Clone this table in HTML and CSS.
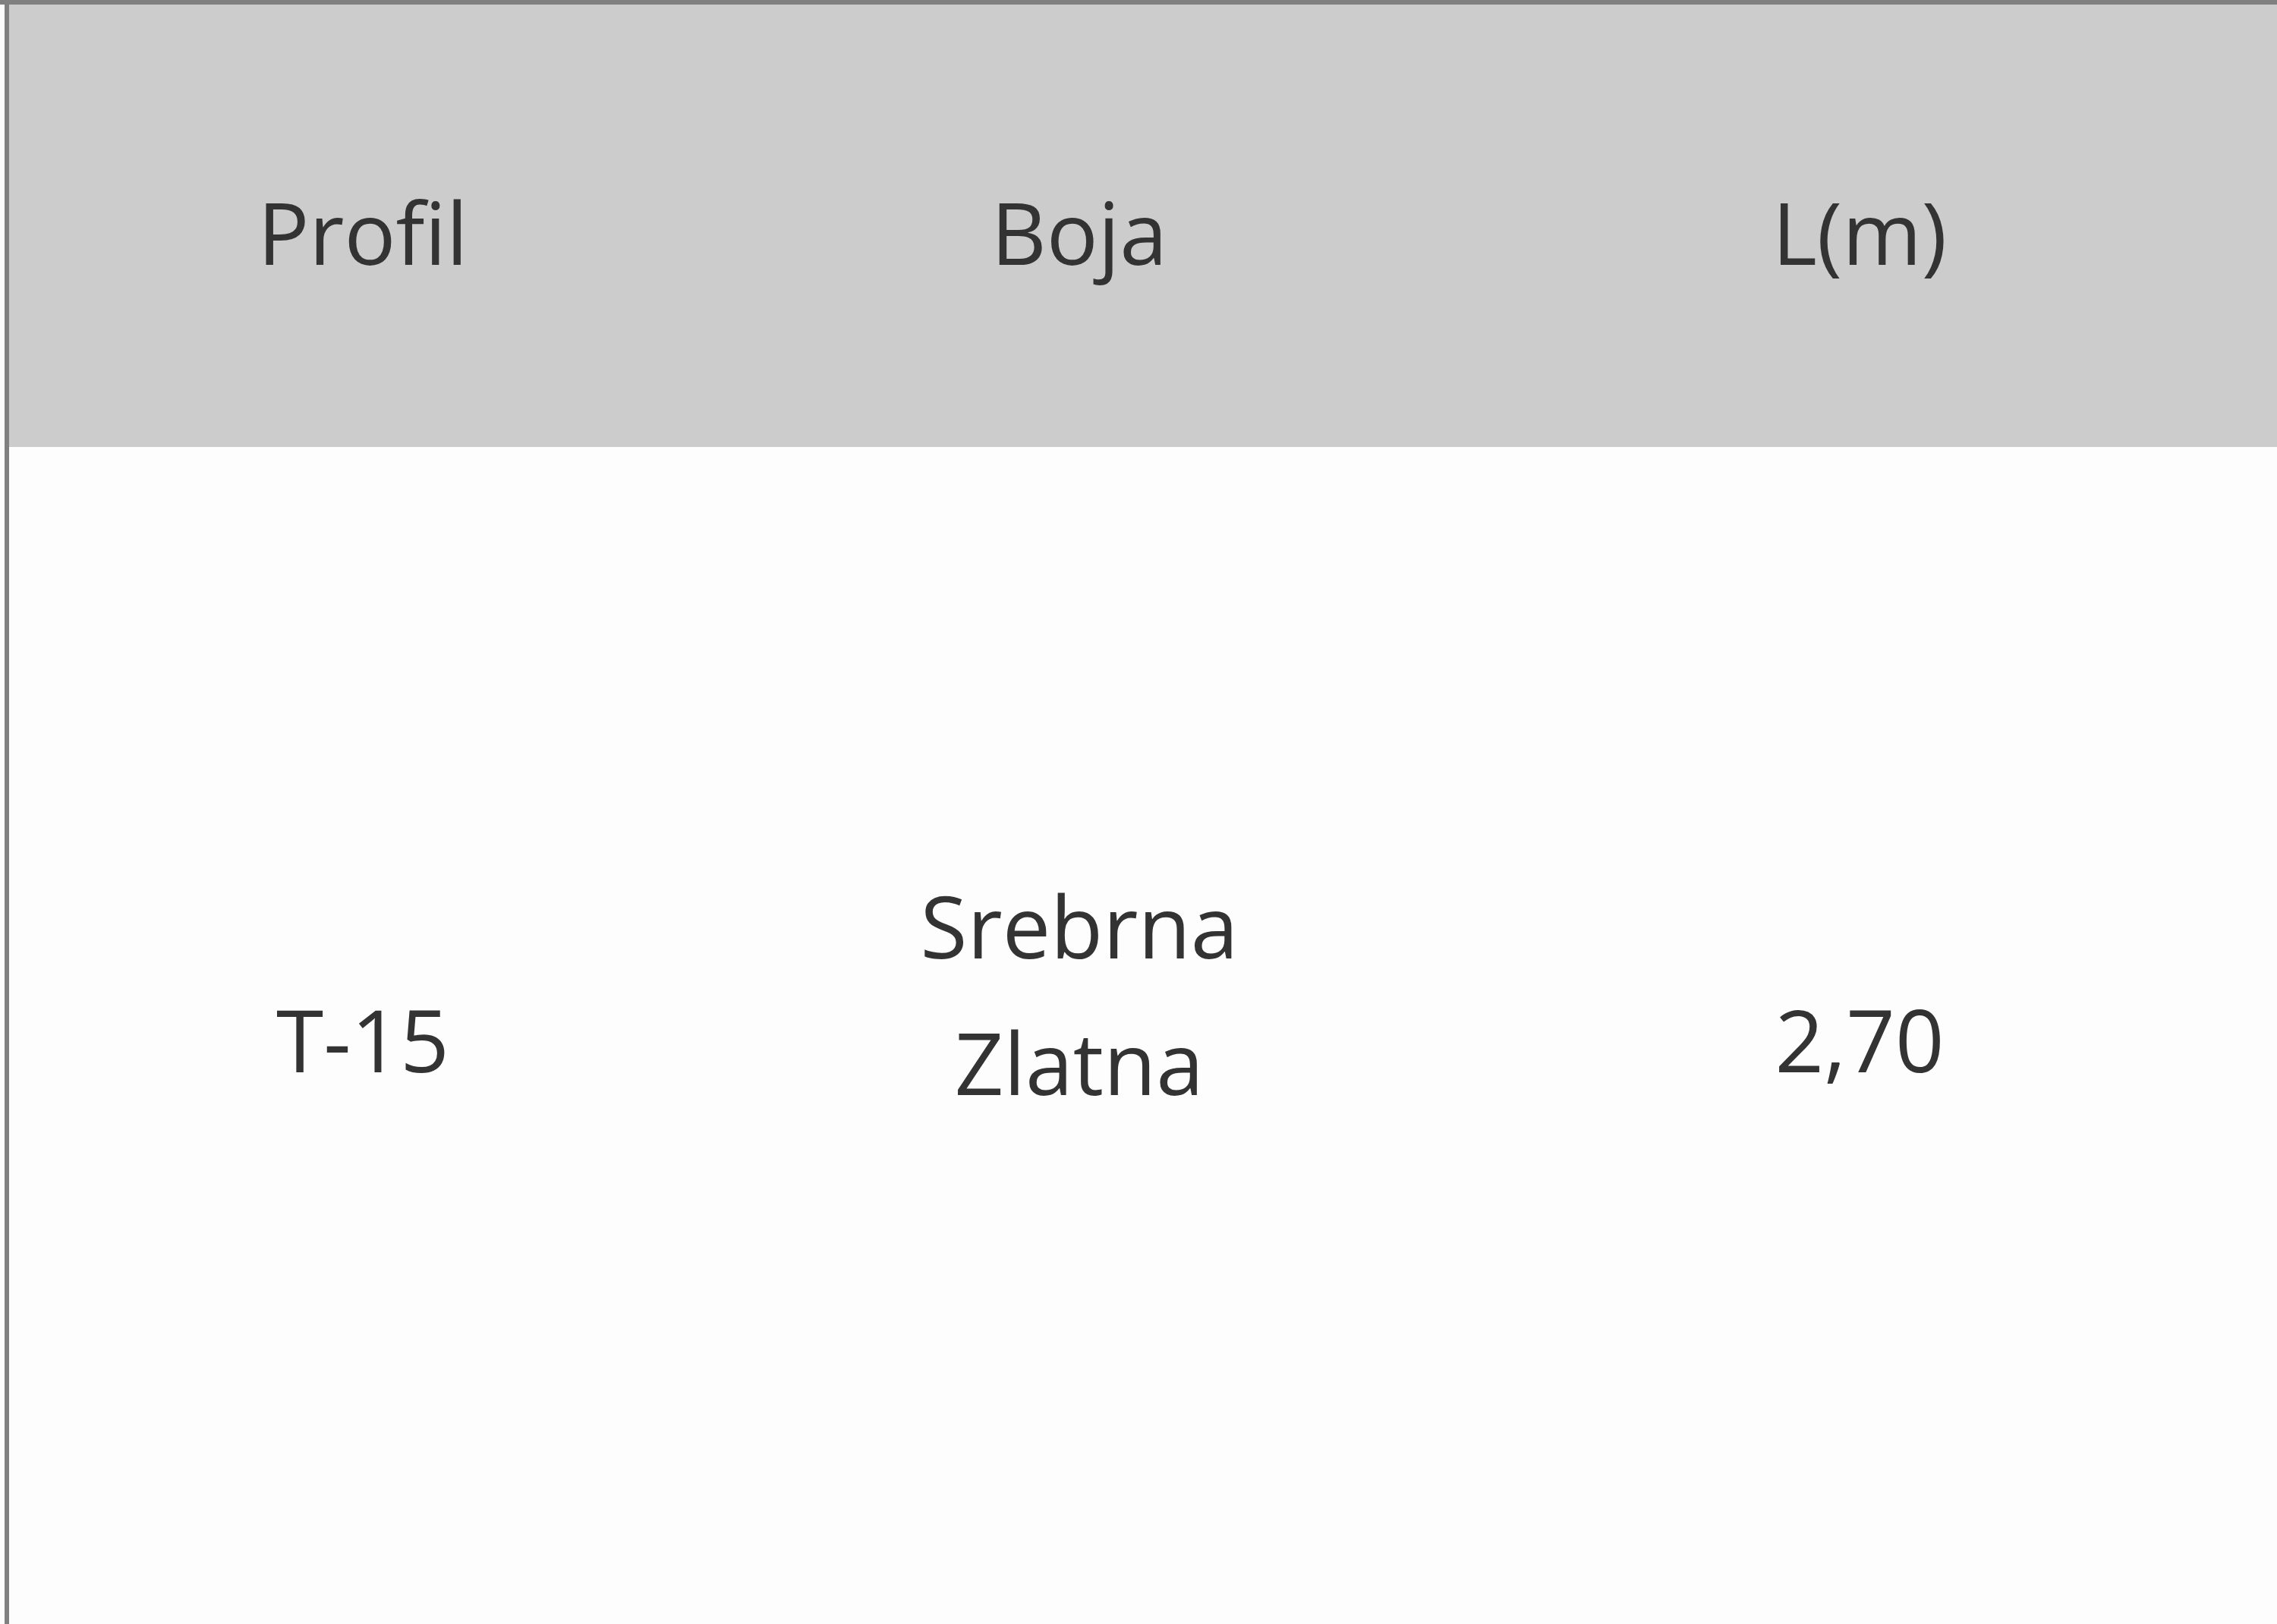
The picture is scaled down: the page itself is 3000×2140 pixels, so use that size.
FILE: index.html
```html
<!DOCTYPE html>
<html lang="hr">
<head>
<meta charset="utf-8">
<title>Profil</title>
<link rel="stylesheet" href="styles.css">
</head>
<body>
<div class="frame">
  <div class="table">
    <div class="row head">
      <div class="cell">Profil</div>
      <div class="cell">Boja</div>
      <div class="cell">L(m)</div>
    </div>
    <div class="row body-row">
      <div class="cell">T-15</div>
      <div class="cell boja">Srebrna<br>Zlatna</div>
      <div class="cell">2,70</div>
    </div>
  </div>
</div>
</body>
</html>
```

FILE: styles.css
```css
html, body {
  margin: 0;
  padding: 0;
  background: #fdfdfd;
  overflow: hidden;
}
body {
  width: 3000px;
  height: 2140px;
  font-family: "Open Sans", "Noto Sans", sans-serif;
  font-size: 113px;
  line-height: 180px;
  color: #333333;
}
.frame {
  border-top: 6px solid #808080;
  padding-left: 6px;
  height: 2134px;
}
.table {
  border-left: 6px solid #808080;
  height: 100%;
}
.row {
  display: grid;
  grid-template-columns: 932px 956px 1100px;
  align-items: center;
}
.cell {
  text-align: center;
}
.head {
  background: #cccccc;
  height: 569px;
  padding-top: 14px;
}
.body-row {
  height: 1560px;
  background: #fdfdfd;
}
.boja {
  padding-bottom: 120px;
}
```
